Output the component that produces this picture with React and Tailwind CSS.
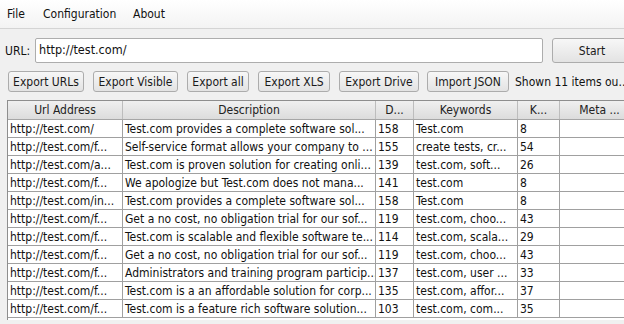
import React from "react";

const rows = [
  ["http://test.com/", "Test.com provides a complete software sol...", "158", "Test.com", "8"],
  ["http://test.com/f...", "Self-service format allows your company to ...", "155", "create tests, cr...", "54"],
  ["http://test.com/a...", "Test.com is proven solution for creating onli...", "139", "test.com, soft...", "26"],
  ["http://test.com/f...", "We apologize but Test.com does not mana...", "141", "test.com", "8"],
  ["http://test.com/in...", "Test.com provides a complete software sol...", "158", "Test.com", "8"],
  ["http://test.com/f...", "Get a no cost, no obligation trial for our sof...", "119", "test.com, choo...", "43"],
  ["http://test.com/f...", "Test.com is scalable and flexible software te...", "114", "test.com, scala...", "29"],
  ["http://test.com/f...", "Get a no cost, no obligation trial for our sof...", "119", "test.com, choo...", "43"],
  ["http://test.com/f...", "Administrators and training program particip...", "137", "test.com, user ...", "33"],
  ["http://test.com/f...", "Test.com is a an affordable solution for corp...", "135", "test.com, affor...", "37"],
  ["http://test.com/f...", "Test.com is a feature rich software solution...", "103", "test.com, com...", "35"],
];

const cols = [
  { label: "Url Address", w: "w-[115px]" },
  { label: "Description", w: "w-[253px]" },
  { label: "D...", w: "w-[38px]" },
  { label: "Keywords", w: "w-[104px]" },
  { label: "K...", w: "w-[42px]" },
  { label: "Meta ...", w: "w-[80px]" },
];

const buttons = [
  { label: "Export URLs", w: "w-[76px]" },
  { label: "Export Visible", w: "w-[85px]" },
  { label: "Export all", w: "w-[62px]" },
  { label: "Export XLS", w: "w-[72px]" },
  { label: "Export Drive", w: "w-[80px]" },
  { label: "Import JSON", w: "w-[82px]" },
];

const Btn = ({ children, className = "" }) => (
  <button className={`shrink-0 rounded-[3px] border border-[#acacac] bg-gradient-to-b from-[#f7f7f7] to-[#e3e3e3] text-[#1a1a1a] leading-none whitespace-nowrap text-center ${className}`}>
    {children}
  </button>
);

export default function App() {
  return (
    <div className="w-[624px] h-[324px] overflow-hidden bg-[#f0f0f0] text-[#111] font-['DejaVu_Sans_Condensed','DejaVu_Sans',sans-serif] text-[12px]">
      {/* Menu */}
      <div className="h-[29px] flex items-center pl-[7px] bg-gradient-to-b from-[#ffffff] to-[#f3f3f3] border-b border-[#d4d4d4]">
        <span className="w-[36px]">File</span>
        <span className="w-[90px]">Configuration</span>
        <span>About</span>
      </div>

      {/* URL row */}
      <div className="flex items-center h-[25px] mt-[9px] pl-[5px]">
        <span className="w-[30px] shrink-0">URL:</span>
        <div className="w-[508px] h-[25px] shrink-0 flex items-center pl-[3px] bg-white border border-[#adadad] rounded-[2px] text-[12.5px]">
          http://test.com/
        </div>
        <Btn className="ml-[9px] w-[80px] h-[25px] text-[12px]">Start</Btn>
      </div>

      {/* Button row */}
      <div className="flex items-center mt-[8px] pl-[8px] whitespace-nowrap">
        {buttons.map((b, i) => (
          <Btn key={b.label} className={`${b.w} h-[21px] text-[12px] ${i === 0 ? "" : i === 5 ? "ml-[8px]" : "ml-[9px]"}`}>
            {b.label}
          </Btn>
        ))}
        <span className="ml-[6px] shrink-0">Shown 11 items ou...</span>
      </div>

      {/* Table */}
      <div className="mt-[8px] ml-[7px] h-[220px] bg-white border-l border-t border-[#8e8e8e] overflow-hidden text-[12px]">
        <div className="flex h-[19px] bg-gradient-to-b from-[#f0f0f0] to-[#dcdcdc] border-b border-[#a6a6a6]">
          {cols.map((c) => (
            <div key={c.label} className={`${c.w} shrink-0 flex items-center justify-center border-r border-[#bdbdbd] text-[#222]`}>
              {c.label}
            </div>
          ))}
        </div>
        {rows.map((r, i) => (
          <div key={i} className="flex h-[18px] border-b border-[#a0a0a0]">
            {[...r, ""].map((cell, j) => (
              <div key={j} className={`${cols[j].w} shrink-0 flex items-center pl-[2px] border-r border-[#a0a0a0] whitespace-nowrap overflow-hidden`}>
                {cell}
              </div>
            ))}
          </div>
        ))}
      </div>
    </div>
  );
}
